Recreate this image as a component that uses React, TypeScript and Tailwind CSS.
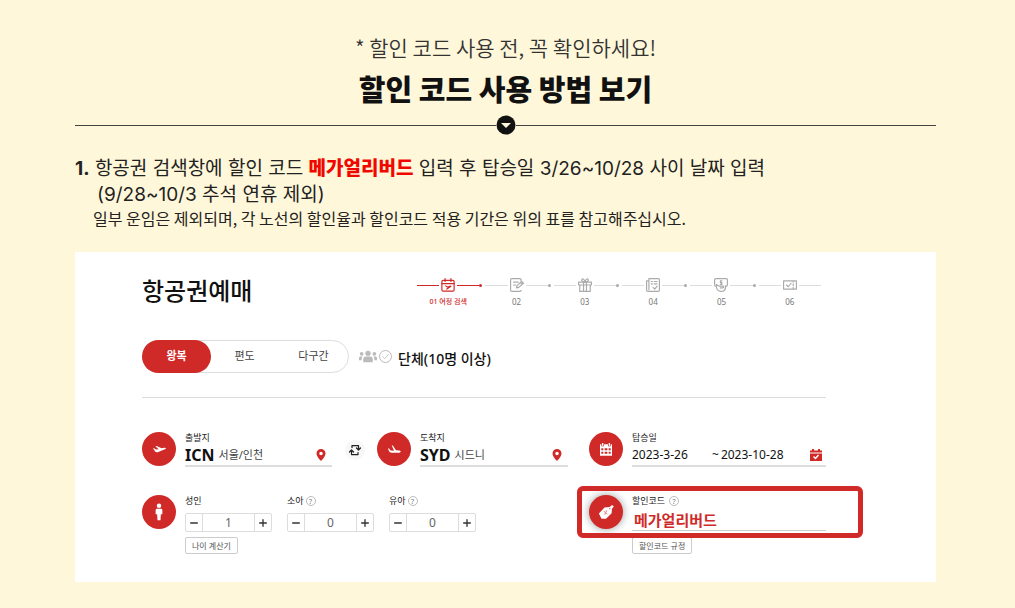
import { useState, ReactNode } from "react";

const Svg = ({ size, children, className = "" }: { size: string; children: ReactNode; className?: string }) => (
  <svg
    viewBox="0 0 24 24"
    fill="none"
    stroke="currentColor"
    strokeWidth="2"
    strokeLinecap="round"
    strokeLinejoin="round"
    aria-hidden="true"
    className={`${size} shrink-0 ${className}`}
  >
    {children}
  </svg>
);

const steps = [
  {
    label: "01 여정 검색",
    icon: (
      <>
        <rect x="1.5" y="4" width="21" height="18.5" rx="2" />
        <path d="M1.5 9.5h21M7 1v5M17 1v5M8 13.500l3 2 6-1.500-7 5" />
      </>
    ),
  },
  {
    label: "02",
    icon: (
      <>
        <path d="M19 5V3a2 2 0 0 0-2-2H3a2 2 0 0 0-2 2v18a2 2 0 0 0 2 2h14a2 2 0 0 0 2-2M6 7h8M6 12h4" />
        <path d="M11 17l1-4 8-7 3 3-8 7zM18 8l3 3" />
      </>
    ),
  },
  {
    label: "03",
    icon: (
      <>
        <path d="M1 7h22v5H1zM3 12v11h18V12M9.500 7v16M14.500 7v16" />
        <path d="M12 7C9 7 5 5 6.500 2.500S12 3 12 7c0-4 4-7 5.500-4.500S15 7 12 7z" />
      </>
    ),
  },
  {
    label: "04",
    icon: (
      <>
        <path d="M5 1h16a2 2 0 0 1 2 2v18a2 2 0 0 1-2 2H3a2 2 0 0 1-2-2V5h4zM5 5v15" />
        <path d="M9 6h2M14 6h5M9 10h2M14 10h5M12 16l3 3 4-5" />
      </>
    ),
  },
  {
    label: "05",
    icon: (
      <>
        <path d="M4 14H3a2 2 0 0 1-2-2V3a2 2 0 0 1 2-2h18a2 2 0 0 1 2 2v9a2 2 0 0 1-2 2h-2" />
        <path d="M4 11l5 3h6c2 0 2 3 0 3h-4M4 13c0 6 3 10 8 10s8-4 8-9M13.500 5H11v3h2.500v3H11" />
      </>
    ),
  },
  {
    label: "06",
    icon: <path d="M1 5h22v14H1zM17.500 5v2M17.500 10v3M17.500 16v3M6 12l3 3 5-6" />,
  },
];

const trips = ["왕복", "편도", "다구간"];

const passengers = [
  { id: "adult", label: "성인", count: 1, help: false },
  { id: "child", label: "소아", count: 0, help: true },
  { id: "infant", label: "유아", count: 0, help: true },
];

const TakeOff = () => (
  <svg viewBox="0 0 24 24" className="h-4 w-4" fill="currentColor" aria-hidden="true">
    <path d="M3 11l1.500-.3 3 2 4-.2L6.500 8l2-.4 7.500 3.400 4-.8c2.500-.5 3 1.500.8 2.300L10 16.700c-1.500.5-2.500.2-3.500-.5z" />
  </svg>
);

const Landing = () => (
  <svg viewBox="0 0 24 24" className="h-4 w-4" fill="currentColor" aria-hidden="true">
    <path d="M3 11l1.500.2 2.500 3 5 .3L8.500 6.500l2 .5 4.500 7 5 .3c3 .4 2.500 3.200 0 3.200H9c-2.500-.2-4-1-4.800-3z" />
  </svg>
);

const Calendar = () => (
  <svg viewBox="0 0 24 24" className="h-4 w-4" fill="currentColor" aria-hidden="true">
    <path
      fillRule="evenodd"
      d="M3 5h2v3h4V5h6v3h4V5h2v17H3zM5 11v3h3v-3zm5 0v3h4v-3zm6 0v3h3v-3zM5 16v3h3v-3zm5 0v3h4v-3zm6 0v3h3v-3z"
    />
    <path d="M6 3h2v4H6zM16 3h2v4h-2z" />
  </svg>
);

const Person = () => (
  <svg viewBox="0 0 24 24" className="h-[18px] w-[18px]" fill="currentColor" aria-hidden="true">
    <circle cx="12" cy="3.500" r="3" />
    <path d="M9.500 7.500h5c1.500 0 2 1 2 2V15h-2l-.5 8h-4l-.5-8h-2V9.500c0-1 .5-2 2-2z" />
  </svg>
);

const Tag = () => (
  <svg viewBox="0 0 24 24" className="h-[18px] w-[18px]" aria-hidden="true">
    <path fill="currentColor" d="M2.500 14L10 6l7-.8L20 2.500l2.500 2L20 7.500l-.5 6L12 21H6z" />
    <path stroke="#cf2a27" strokeWidth="1" strokeDasharray="2 1" d="M9 11l5 4M13 10l-3 6M16 8l3-1" />
  </svg>
);

const Round = ({ children, className = "" }: { children: ReactNode; className?: string }) => (
  <span
    className={`flex h-[34px] w-[34px] shrink-0 items-center justify-center rounded-full bg-[#cf2a27] text-white ${className}`}
  >
    {children}
  </span>
);

const Help = () => (
  <button
    type="button"
    aria-label="도움말"
    className="flex h-[10px] w-[10px] items-center justify-center rounded-full border border-[#bbb] text-[7px] leading-none text-[#777]"
  >
    ?
  </button>
);

const Pin = () => (
  <svg viewBox="0 0 20 24" className="h-3 w-[10px]" fill="#cf2a27" aria-hidden="true">
    <path fillRule="evenodd" d="M10 0a9 9 0 0 1 9 9c0 6-9 15-9 15S1 15 1 9a9 9 0 0 1 9-9zm0 5.500a3.500 3.500 0 1 0 0 7 3.500 3.500 0 0 0 0-7z" />
  </svg>
);

const Airport = ({ icon, label, code, city }: { icon: ReactNode; label: string; code: string; city: string }) => (
  <div className="flex gap-[9px]">
    <Round>{icon}</Round>
    <div className="min-w-0 flex-1">
      <div className="text-[9px] leading-3 text-[#222]">{label}</div>
      <button
        type="button"
        className="flex h-[23px] w-full items-center border-b-2 border-[#ddd] pr-[6px] text-left"
      >
        <span className="text-base leading-5 font-bold text-[#111]">{code}</span>
        <span className="ml-1 text-[11px] leading-5 text-[#444]">{city}</span>
        <span className="ml-auto">
          <Pin />
        </span>
      </button>
    </div>
  </div>
);

const BookingForm = () => {
  const [trip, setTrip] = useState("왕복");
  const [counts, setCounts] = useState<number[]>(passengers.map((p) => p.count));
  const [code, setCode] = useState("메가얼리버드");
  const [from, setFrom] = useState("2023-3-26");
  const [to, setTo] = useState("2023-10-28");

  const change = (index: number, diff: number) => {
    setCounts(counts.map((c, i) => (i === index ? Math.max(0, c + diff) : c)));
  };

  return (
    <form className="mt-6 bg-white pt-[21px] pr-[110px] pb-7 pl-[67px] font-['Noto_Sans','Noto_Sans_CJK_KR',sans-serif]">
      <div className="flex items-start justify-between">
        <h2 className="text-2xl leading-9 font-medium text-[#111]">항공권예매</h2>
        <ol className="mt-1 flex w-[412px] pr-[2px]">
          {steps.map((step, i) => (
            <li key={step.label} className={`flex-1 ${i === 0 ? "text-[#cf2a27]" : "text-[#aaa]"}`}>
              <div className="flex h-4 items-center">
                <span className={`ml-[3px] h-px flex-1 ${i === 0 ? "bg-[#cf2a27]" : "bg-[#ddd]"}`} />
                <Svg size="h-[14px] w-[14px]" className="mx-[2px]">
                  {step.icon}
                </Svg>
                <span className={`h-px flex-1 ${i === 0 ? "bg-[#cf2a27]" : "bg-[#ddd]"}`} />
                <span className={`h-[3px] w-[3px] rounded-full ${i < steps.length - 1 ? "bg-current" : ""}`} />
              </div>
              <div
                className={`mt-[3px] text-center leading-3 whitespace-nowrap ${
                  i === 0 ? "text-[7px] font-medium" : "text-[8px] text-[#777]"
                }`}
              >
                {step.label}
              </div>
            </li>
          ))}
        </ol>
      </div>

      <div className="mt-[31px] flex items-center">
        <div className="flex h-[33px] w-[207px] rounded-full border border-[#ddd] text-[11px]">
          {trips.map((name) => (
            <button
              key={name}
              type="button"
              onClick={() => setTrip(name)}
              className={
                trip === name
                  ? "-m-px flex-1 rounded-full bg-[#cf2a27] font-bold text-white"
                  : "flex-1 rounded-full text-[#444]"
              }
            >
              {name}
            </button>
          ))}
        </div>
        <label className="ml-[10px] flex items-center text-[#111]">
          <svg viewBox="0 0 34 24" className="h-[13px] w-[18px]" fill="#bbb" aria-hidden="true">
            <circle cx="17" cy="6" r="5" />
            <circle cx="5" cy="7" r="3.500" />
            <circle cx="29" cy="7" r="3.500" />
            <path d="M8 23v-6c0-3 2-5 5-5h8c3 0 5 2 5 5v6zM0 19v-4c0-2 1-3 3-3h4c-2 2-2 4-2 7zM34 19v-4c0-2-1-3-3-3h-4c2 2 2 4 2 7z" />
          </svg>
          <span className="relative ml-[2px] h-[13px] w-[13px]">
            <input type="checkbox" className="block h-full w-full appearance-none rounded-full border border-[#bbb]" />
            <Svg size="h-[9px] w-[9px]" className="pointer-events-none absolute top-[2px] left-[2px] text-[#bbb]">
              <path d="M4 12l6 6L20 6" />
            </Svg>
          </span>
          <span className="ml-[6px] pt-[4px] text-[14px] leading-5 font-medium">단체(10명 이상)</span>
        </label>
      </div>

      <hr className="mt-6 border-[#ddd]" />

      <div className="mt-[34px] grid grid-cols-[190fr_45fr_191fr_21fr_237fr] gap-y-[28px]">
        <Airport icon={<TakeOff />} label="출발지" code="ICN" city="서울/인천" />
        <button
          type="button"
          aria-label="출발지 도착지 변경"
          className="mt-2 flex h-5 w-5 items-center justify-center justify-self-center rounded-full bg-[#f7f7f7] text-[#222]"
        >
          <Svg size="h-3 w-3">
            <path strokeWidth="2.500" d="M6 7V3h13v8M15 8l4 4 4-4M18 17v4H5v-8M1 16l4-4 4 4" />
          </Svg>
        </button>
        <Airport icon={<Landing />} label="도착지" code="SYD" city="시드니" />
        <div className="col-start-5 flex gap-[9px]">
          <Round>
            <Calendar />
          </Round>
          <div className="min-w-0 flex-1">
            <label htmlFor="from" className="block text-[9px] leading-3 text-[#222]">
              탑승일
            </label>
            <div className="flex h-[23px] items-center border-b-2 border-[#ddd] pr-1 text-[12px] text-[#111]">
              <input id="from" value={from} onChange={(e) => setFrom(e.target.value)} className="w-20 min-w-0" />
              <span>~</span>
              <input
                aria-label="도착일"
                value={to}
                onChange={(e) => setTo(e.target.value)}
                className="ml-[2px] w-20 min-w-0"
              />
              <svg viewBox="0 0 24 24" className="ml-auto h-3 w-3" aria-hidden="true">
                <path fill="#cf2a27" d="M0 3h4V0h4v3h8V0h4v3h4v4H0zM0 9h24v15H0z" />
                <path fill="none" stroke="#fff" strokeWidth="3" d="M7 15l4 4 6-7" />
              </svg>
            </div>
          </div>
        </div>

        <div className="col-span-4 flex gap-[9px]">
          <Round>
            <Person />
          </Round>
          <div>
            <div className="flex gap-[15px]">
              {passengers.map((p, i) => (
                <div key={p.id}>
                  <div className="flex items-center gap-[2px] text-[9px] leading-3 text-[#222]">
                    <label htmlFor={p.id}>{p.label}</label>
                    {p.help && <Help />}
                  </div>
                  <div className="mt-[6px] flex h-[19px] w-[87px] rounded-xs border border-[#ddd] text-[#333]">
                    <button
                      type="button"
                      aria-label={`${p.label} 빼기`}
                      onClick={() => change(i, -1)}
                      className="flex w-4 items-center justify-center"
                    >
                      <Svg size="h-2 w-2">
                        <path strokeWidth="4" d="M2 12h20" />
                      </Svg>
                    </button>
                    <input
                      id={p.id}
                      value={counts[i]}
                      readOnly
                      className="min-w-0 flex-1 border-x border-[#ddd] text-center text-[12px] leading-4 text-[#666]"
                    />
                    <button
                      type="button"
                      aria-label={`${p.label} 더하기`}
                      onClick={() => change(i, 1)}
                      className="flex w-4 items-center justify-center"
                    >
                      <Svg size="h-2 w-2">
                        <path strokeWidth="4" d="M2 12h20M12 2v20" />
                      </Svg>
                    </button>
                  </div>
                </div>
              ))}
            </div>
            <button
              type="button"
              className="mt-[5px] block h-[17px] rounded-xs border border-[#ccc] px-[6px] text-[8px] leading-[14px] text-[#555]"
            >
              나이 계산기
            </button>
          </div>
        </div>

        <div className="relative flex gap-[9px]">
          <Round className="shadow-[0_0_8px_#999]">
            <Tag />
          </Round>
          <div className="min-w-0 flex-1">
            <div className="flex items-center gap-1 text-[9px] leading-3 text-[#222]">
              <label htmlFor="code">할인코드</label>
              <Help />
            </div>
            <input
              id="code"
              value={code}
              onChange={(e) => setCode(e.target.value)}
              className="block h-6 w-full border-b border-[#ccc] pt-[2px] pl-[2px] text-[15px] font-bold text-[#cf2a27]"
            />
            <button
              type="button"
              className="mt-[6px] block h-[17px] rounded-xs border border-[#ccc] px-[6px] text-[8px] leading-[14px] text-[#555]"
            >
              할인코드 규정
            </button>
          </div>
          <div className="pointer-events-none absolute -top-[9px] -right-[37px] -left-3 h-[52px] rounded-md border-[5px] border-[#cf2a27]" />
        </div>
      </div>
    </form>
  );
};

const App = () => {
  return (
    <main className="min-h-screen bg-[#fff7d9] pt-[31px] pr-[79px] pb-[26px] pl-[75px] font-['Noto_Sans_CJK_KR',sans-serif] text-[#222]">
      <header className="text-center">
        <p className="text-[21px] leading-8 font-[350] text-[#333]">* 할인 코드 사용 전, 꼭 확인하세요!</p>
        <h1 className="mt-1 text-[29px] leading-[42px] font-black text-[#111]">할인 코드 사용 방법 보기</h1>
        <div className="mt-[6px] flex h-5 items-center">
          <span className="h-px flex-1 bg-[#444]" />
          <svg viewBox="0 0 20 20" className="h-5 w-5" aria-hidden="true">
            <circle cx="10" cy="10" r="9.500" fill="#111" />
            <path d="M5 8h10l-5 5z" fill="#fff7d9" />
          </svg>
          <span className="h-px flex-1 bg-[#444]" />
        </div>
      </header>

      <section className="mt-[21px]">
        <div className="font-[Inter,'Noto_Sans_CJK_KR',sans-serif] text-[19px] leading-[26px]">
          <p>
            <b>1.</b> 항공권 검색창에 할인 코드 <b className="font-black text-[#f00800]">메가얼리버드</b> 입력 후 탑승일
            3/26~10/28 사이 날짜 입력
          </p>
          <p className="pl-[22px]">(9/28~10/3 추석 연휴 제외)</p>
        </div>
        <p className="pl-[18px] text-base leading-5">
          일부 운임은 제외되며, 각 노선의 할인율과 할인코드 적용 기간은 위의 표를 참고해주십시오.
        </p>
      </section>

      <BookingForm />
    </main>
  );
};

export default App;
